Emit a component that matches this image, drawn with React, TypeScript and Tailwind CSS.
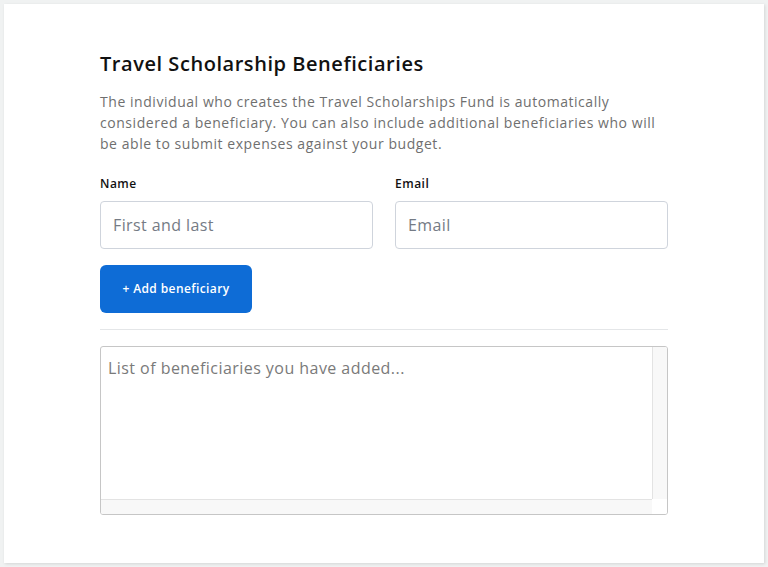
export default function App() {
  return (
    <div className="min-h-[567px] w-full bg-[#f0f2f2] p-1 font-['Open_Sans',sans-serif]">
      <div className="h-[559px] w-[760px] bg-white shadow-[1px_1px_3px_rgba(0,0,0,0.12)]">
        <div className="mx-auto w-[568px] pt-[45px]">
          <h1 className="text-[20px] font-semibold leading-[30px] tracking-[0.55px] text-[#111]">
            Travel Scholarship Beneficiaries
          </h1>
          <p className="mt-[12px] text-[14px] leading-[21px] tracking-[0.55px] text-[#6f6f6f]">
            The individual who creates the Travel Scholarships Fund is automatically
            <br />
            considered a beneficiary. You can also include additional beneficiaries who will
            <br />
            be able to submit expenses against your budget.
          </p>

          <div className="mt-[21px] grid grid-cols-2 gap-[22px]">
            <label className="flex flex-col">
              <span className="text-[12px] font-semibold leading-[18px] tracking-[0.5px] text-[#111]">Name</span>
              <input
                placeholder="First and last"
                className="mt-[8px] h-[48px] rounded-[4px] border border-[#cfd4dc] px-[12px] text-[16px] tracking-[0.4px] outline-none placeholder:text-[#757b85]"
              />
            </label>
            <label className="flex flex-col">
              <span className="text-[12px] font-semibold leading-[18px] tracking-[0.5px] text-[#111]">Email</span>
              <input
                placeholder="Email"
                className="mt-[8px] h-[48px] rounded-[4px] border border-[#cfd4dc] px-[12px] text-[16px] tracking-[0.4px] outline-none placeholder:text-[#757b85]"
              />
            </label>
          </div>

          <button className="mt-[16px] h-[48px] w-[152px] rounded-[6px] bg-[#0e6cd6] text-[12px] font-semibold tracking-[0.4px] text-white">
            + Add beneficiary
          </button>

          <div className="mt-[16px] h-px bg-[#e4e6e8]" />

          <div className="mt-[16px] flex h-[169px] flex-col overflow-hidden rounded-[3px] border border-[#c6c6c6]">
            <div className="flex flex-1">
              <div className="flex-1 px-[7px] pt-[9px] text-[16px] leading-[24px] tracking-[0.45px] text-[#7a7a7a]">
                List of beneficiaries you have added...
              </div>
              <div className="w-[15px] border-l border-[#e3e3e3] bg-[#f8f8f8]" />
            </div>
            <div className="flex h-[15px]">
              <div className="flex-1 border-t border-[#e3e3e3] bg-[#f8f8f8]" />
              <div className="w-[15px] bg-white" />
            </div>
          </div>
        </div>
      </div>
    </div>
  );
}
